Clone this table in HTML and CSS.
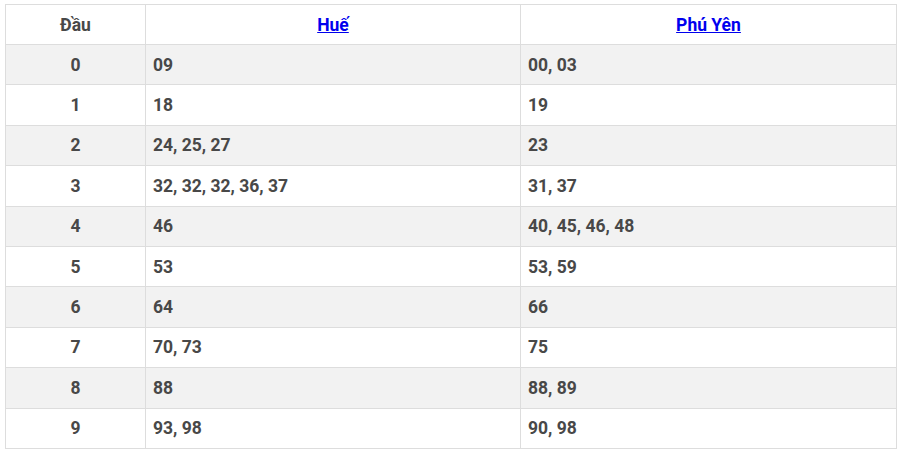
FILE: index.html
```html
<!DOCTYPE html>
<html lang="vi">
<head>
<meta charset="utf-8">
<link rel="stylesheet" href="styles.css">
</head>
<body>
<table class="loto">
  <thead>
    <tr><th class="c1">Đầu</th><th class="c2"><a href="#">Huế</a></th><th class="c3"><a href="#">Phú Yên</a></th></tr>
  </thead>
  <tbody>
    <tr><td class="head">0</td><td>09</td><td>00, 03</td></tr>
    <tr><td class="head">1</td><td>18</td><td>19</td></tr>
    <tr><td class="head">2</td><td>24, 25, 27</td><td>23</td></tr>
    <tr><td class="head">3</td><td>32, 32, 32, 36, 37</td><td>31, 37</td></tr>
    <tr><td class="head">4</td><td>46</td><td>40, 45, 46, 48</td></tr>
    <tr><td class="head">5</td><td>53</td><td>53, 59</td></tr>
    <tr><td class="head">6</td><td>64</td><td>66</td></tr>
    <tr><td class="head">7</td><td>70, 73</td><td>75</td></tr>
    <tr><td class="head">8</td><td>88</td><td>88, 89</td></tr>
    <tr><td class="head">9</td><td>93, 98</td><td>90, 98</td></tr>
  </tbody>
</table>
</body>
</html>
```
FILE: styles.css
```css
html, body {
  margin: 0;
  padding: 0;
  background: #fff;
}
body {
  padding: 4px 0 0 5px;
  font-family: Roboto, "Liberation Sans", Arial, sans-serif;
}
.loto {
  border-collapse: collapse;
  width: 892px;
  table-layout: fixed;
  color: #484848;
  font-size: 17.5px;
  font-weight: bold;
}
.loto th, .loto td {
  border: 1px solid #ddd;
  height: 40.4px;
  padding: 0 7px;
  box-sizing: border-box;
  text-align: left;
}
.loto th {
  text-align: center;
  height: 40px;
}
.loto .c1 { width: 140px; }
.loto .c2 { width: 375px; }
.loto a { color: #0000ee; text-decoration: underline; }
.loto td.head { text-align: center; }
.loto tbody tr:nth-child(odd) { background: #f2f2f2; }
```
